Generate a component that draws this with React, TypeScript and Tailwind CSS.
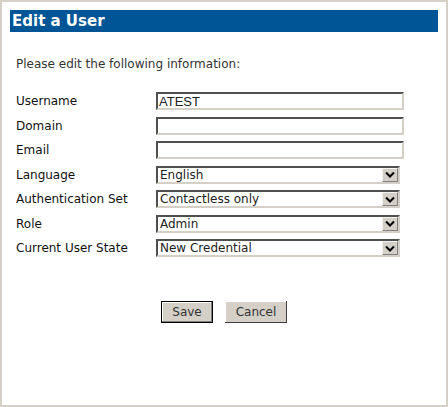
import React from "react";

const fields = [
  { label: "Username", type: "text", value: "ATEST" },
  { label: "Domain", type: "text", value: "" },
  { label: "Email", type: "text", value: "" },
  { label: "Language", type: "select", value: "English" },
  { label: "Authentication Set", type: "select", value: "Contactless only" },
  { label: "Role", type: "select", value: "Admin" },
  { label: "Current User State", type: "select", value: "New Credential" },
];

const inset =
  "border-2 border-t-[#505050] border-l-[#505050] border-b-[#d4d0c8] border-r-[#d4d0c8] bg-white";

const Chevron = () => (
  <svg width="10" height="7" viewBox="0 0 10 7">
    <path d="M1 1.5 L5 5.5 L9 1.5" fill="none" stroke="#000" strokeWidth="2" />
  </svg>
);

const App = () => {
  return (
    <div className="w-[448px] h-[407px] border-2 border-[#d4d0c8] bg-white p-2 font-['DejaVu_Sans',Verdana,sans-serif]">
      <div className="h-[22px] bg-[#005596] text-white font-bold text-[15px] leading-[22px] pl-[2px]">
        Edit a User
      </div>
      <p className="mt-[23px] pl-[6px] text-[12px] text-[#333]">
        Please edit the following information:
      </p>
      <div className="mt-[16px] pl-[6px] flex flex-col">
        {fields.map((f) => (
          <div key={f.label} className="flex items-center h-[24.5px]">
            <span className="w-[140px] text-[12px] text-[#111]">{f.label}</span>
            {f.type === "text" ? (
              <div
                className={`${inset} w-[248px] h-[18px] flex items-center pl-px text-[13px] leading-none text-[#222] font-['Liberation_Sans',Arial,sans-serif]`}
              >
                {f.value}
              </div>
            ) : (
              <div
                className={`${inset} w-[244px] h-[18px] flex items-center justify-between text-[12px] leading-none text-[#222]`}
              >
                <span className="pl-[2px]">{f.value}</span>
                <span className="w-[16px] h-[14px] bg-[#d4d0c8] border border-[#f4f2ee] border-r-[#808080] border-b-[#808080] flex items-center justify-center">
                  <Chevron />
                </span>
              </div>
            )}
          </div>
        ))}
      </div>
      <div className="mt-[40px] flex pl-[151px] gap-[12px]">
        <button className="w-[52px] h-[22px] bg-[#d4d0c8] border border-black text-[12px] text-[#333] shadow-[inset_-1px_-1px_0_#808080,inset_1px_1px_0_#fff]">
          Save
        </button>
        <button className="w-[62px] h-[22px] bg-[#d4d0c8] text-[12px] text-[#333] shadow-[inset_-1px_-1px_0_#404040,inset_1px_1px_0_#fff]">
          Cancel
        </button>
      </div>
    </div>
  );
};

export default App;
